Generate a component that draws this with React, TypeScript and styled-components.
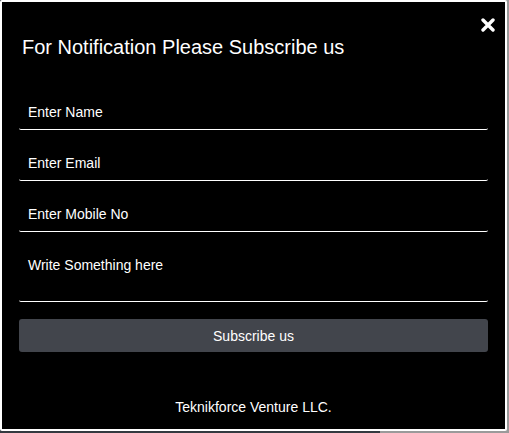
import React from "react";
import styled, { createGlobalStyle } from "styled-components";

const Global = createGlobalStyle`
  html, body { margin: 0; padding: 0; }
  body {
    background: #343a40;
    font-family: "Liberation Sans", Arial, sans-serif;
    width: 509px;
    height: 433px;
    overflow: hidden;
  }
`;

const Page = styled.div`
  width: 509px;
  height: 433px;
  background: linear-gradient(to right, #343a40 0, #343a40 380px, #9a9a9a 380px);
  display: flex;
  align-items: flex-start;
`;

const Modal = styled.div`
  position: relative;
  box-sizing: border-box;
  width: 507px;
  height: 431px;
  background: #000;
  border: 2px solid #fff;
  border-radius: 2px;
  padding: 31px 17px 0 17px;
  display: flex;
  flex-direction: column;
  color: #fff;
`;

const Close = styled.button`
  position: absolute;
  top: 14px;
  right: 8px;
  width: 18px;
  height: 18px;
  padding: 0;
  border: 0;
  background: transparent;
  display: flex;
  align-items: center;
  justify-content: center;
  cursor: pointer;
`;

const Title = styled.h2`
  margin: 0 0 0 3px;
  font-size: 20px;
  font-weight: 400;
  line-height: 28px;
`;

const Form = styled.form`
  display: flex;
  flex-direction: column;
  gap: 16px;
  margin-top: 34px;
`;

const Field = styled.input`
  box-sizing: border-box;
  height: 35px;
  width: 100%;
  background: transparent;
  border: 0;
  border-bottom: 1px solid #fff;
  border-radius: 0 0 2px 2px;
  padding: 0 9px 0 9px;
  color: #fff;
  font-family: "Liberation Sans", Arial, sans-serif;
  font-size: 14px;
  outline: none;
  &::placeholder { color: #fff; opacity: 1; }
`;

const Area = styled.textarea`
  box-sizing: border-box;
  height: 54px;
  width: 100%;
  resize: none;
  background: transparent;
  border: 0;
  border-bottom: 1px solid #fff;
  border-radius: 0 0 2px 2px;
  padding: 9px 9px 0 9px;
  color: #fff;
  font-family: "Liberation Sans", Arial, sans-serif;
  font-size: 14px;
  line-height: 16px;
  outline: none;
  &::placeholder { color: #fff; opacity: 1; }
`;

const Submit = styled.button`
  margin-top: 1px;
  height: 33px;
  width: 100%;
  border: 0;
  border-radius: 3px;
  background: #42454c;
  color: #fff;
  font-family: "Liberation Sans", Arial, sans-serif;
  font-size: 14px;
  cursor: pointer;
`;

const Footer = styled.p`
  margin: 47px 0 0 0;
  text-align: center;
  font-size: 14px;
  line-height: 16px;
`;

export default function App() {
  return (
    <>
      <Global />
      <Page>
        <Modal>
          <Close aria-label="Close">
            <svg width="14" height="14" viewBox="0 0 14 14">
              <path d="M2 2 L12 12 M12 2 L2 12" stroke="#fff" strokeWidth="3.4" strokeLinecap="round" />
            </svg>
          </Close>
          <Title>For Notification Please Subscribe us</Title>
          <Form onSubmit={(e) => e.preventDefault()}>
            <Field placeholder="Enter Name" />
            <Field placeholder="Enter Email" />
            <Field placeholder="Enter Mobile No" />
            <Area placeholder="Write Something here" />
            <Submit type="submit">Subscribe us</Submit>
          </Form>
          <Footer>Teknikforce Venture LLC.</Footer>
        </Modal>
      </Page>
    </>
  );
}
